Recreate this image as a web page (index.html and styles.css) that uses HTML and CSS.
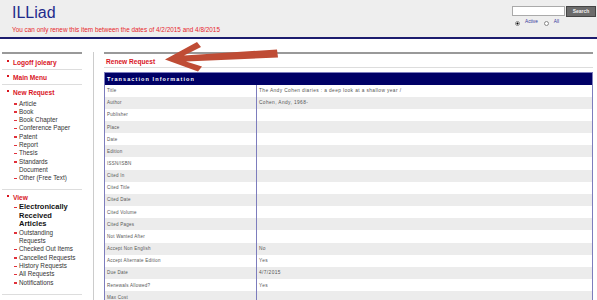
FILE: index.html
```html
<!DOCTYPE html>
<html lang="en">
<head>
    <meta charset="UTF-8">
    <title>ILLiad - Renew Request</title>
    <link rel="stylesheet" href="styles.css">
</head>
<body>

<!-- Header -->
<header class="top">
    <div class="brand">
        <h1 class="logo">ILLiad</h1>
        <p class="notice">You can only renew this item between the dates of 4/2/2015 and 4/8/2015</p>
    </div>
    <form class="search">
        <div class="search-row">
            <input type="text" class="search-input">
            <button type="button" class="search-btn">Search</button>
        </div>
        <div class="scope">
            <label><input type="radio" name="scope" checked> Active</label>
            <label><input type="radio" name="scope"> All</label>
        </div>
    </form>
</header>

<div class="page">
    <!-- Left menu -->
    <nav class="sidebar">
        <ul class="menu">
            <li class="menu-item"><a class="menu-link">Logoff joleary</a></li>
            <li class="menu-item"><a class="menu-link">Main Menu</a></li>
            <li class="menu-item">
                <a class="menu-link">New Request</a>
                <ul class="sub-menu">
                    <li>Article</li>
                    <li>Book</li>
                    <li>Book Chapter</li>
                    <li>Conference Paper</li>
                    <li>Patent</li>
                    <li>Report</li>
                    <li>Thesis</li>
                    <li>Standards Document</li>
                    <li>Other (Free Text)</li>
                </ul>
            </li>
            <li class="menu-item">
                <a class="menu-link">View</a>
                <ul class="sub-menu">
                    <li class="current">Electronically Received Articles</li>
                    <li>Outstanding Requests</li>
                    <li>Checked Out Items</li>
                    <li>Cancelled Requests</li>
                    <li>History Requests</li>
                    <li>All Requests</li>
                    <li>Notifications</li>
                </ul>
            </li>
            <li class="menu-item"><a class="menu-link">Tools</a></li>
        </ul>
    </nav>

    <!-- Main content -->
    <main class="content">
        <h2 class="page-title">Renew Request</h2>
        <div class="info">
            <div class="info-head">Transaction Information</div>
            <div class="info-row"><span class="label">Title</span><span class="value">The Andy Cohen diaries : a deep look at a shallow year /</span></div>
            <div class="info-row"><span class="label">Author</span><span class="value">Cohen, Andy, 1968-</span></div>
            <div class="info-row"><span class="label">Publisher</span><span class="value"></span></div>
            <div class="info-row"><span class="label">Place</span><span class="value"></span></div>
            <div class="info-row"><span class="label">Date</span><span class="value"></span></div>
            <div class="info-row"><span class="label">Edition</span><span class="value"></span></div>
            <div class="info-row"><span class="label">ISSN/ISBN</span><span class="value"></span></div>
            <div class="info-row"><span class="label">Cited In</span><span class="value"></span></div>
            <div class="info-row"><span class="label">Cited Title</span><span class="value"></span></div>
            <div class="info-row"><span class="label">Cited Date</span><span class="value"></span></div>
            <div class="info-row"><span class="label">Cited Volume</span><span class="value"></span></div>
            <div class="info-row"><span class="label">Cited Pages</span><span class="value"></span></div>
            <div class="info-row"><span class="label">Not Wanted After</span><span class="value"></span></div>
            <div class="info-row"><span class="label">Accept Non English</span><span class="value">No</span></div>
            <div class="info-row"><span class="label">Accept Alternate Edition</span><span class="value">Yes</span></div>
            <div class="info-row"><span class="label">Due Date</span><span class="value">4/7/2015</span></div>
            <div class="info-row"><span class="label">Renewals Allowed?</span><span class="value">Yes</span></div>
            <div class="info-row"><span class="label">Max Cost</span><span class="value"></span></div>
        </div>
    </main>
</div>

<!-- Annotation arrow drawn over the page -->
<svg class="arrow" viewBox="160 38 125 38" width="125" height="38">
    <polygon points="165,59.5 197,42 201,47 184,55.5 277,49.5 278,57.5 186,61.5 202,66.5 198,71.5" fill="#bf4c35"/>
</svg>

</body>
</html>
```

FILE: styles.css
```css
* {
    box-sizing: border-box;
    margin: 0;
    padding: 0;
}

body {
    font-family: "Liberation Sans", Arial, sans-serif;
    background: #fff;
    color: #333;
    width: 597px;
    height: 300px;
    overflow: hidden;
    position: relative;
}

/* Header */
.top {
    display: flex;
    justify-content: space-between;
    height: 39px;
    background: #eeeeee;
    border-bottom: 2px solid #1c1c6e;
}

.brand {
    padding-left: 12px;
}

.logo {
    font-size: 16px;
    line-height: 16px;
    font-weight: normal;
    color: #1e2b8c;
    padding-top: 5px;
}

.notice {
    margin-top: 5px;
    font-size: 6.4px;
    line-height: 8px;
    color: #e8262b;
}

.search {
    padding: 5.5px 1px 0 0;
}

.search-row {
    display: flex;
    align-items: center;
    gap: 1px;
}

.search-input {
    width: 53px;
    height: 10px;
    border: 1px solid #aaa;
    background: #fff;
}

.search-btn {
    width: 30px;
    height: 11px;
    background: #6b6b6b;
    border: 1px solid #444;
    color: #f2f2f2;
    font-family: inherit;
    font-size: 5px;
    font-weight: bold;
}

.scope {
    display: flex;
    gap: 6px;
    margin-top: 2px;
    padding-left: 3px;
}

.scope label {
    display: flex;
    align-items: flex-start;
    gap: 5px;
    font-size: 4.7px;
    line-height: 6px;
    color: #333399;
}

.scope input {
    appearance: none;
    width: 5px;
    height: 5px;
    margin-top: 2px;
    border: 1px solid #888;
    border-radius: 50%;
    background: #fff;
}

.scope input:checked {
    background: radial-gradient(circle, #000 40%, #fff 55%);
}

/* Page */
.page {
    display: flex;
    padding-top: 13px;
}

/* Left menu */
.sidebar {
    width: 94px;
    flex-shrink: 0;
    padding: 0 11px 0 2px;
    border-right: 1px solid #ccc;
}

.menu {
    list-style: none;
    border-top: 2px solid #999;
    padding-top: 1px;
}

.menu-item {
    padding: 3px 0 2px;
    border-bottom: 1px solid #ddd;
}

.menu-link {
    display: block;
    position: relative;
    padding-left: 11px;
    font-size: 6.6px;
    line-height: 9px;
    font-weight: bold;
    color: #d9141e;
}

.menu-link::before {
    content: "";
    position: absolute;
    left: 5px;
    top: 2px;
    width: 2px;
    height: 2px;
    background: #d9141e;
}

.sub-menu {
    list-style: none;
    margin: 2.5px 0 4.5px;
    padding: 0 5px 0 17px;
}

.menu-link + .sub-menu .current:first-child {
    margin-top: -1.5px;
}

.sub-menu li {
    position: relative;
    font-size: 6.3px;
    line-height: 8.33px;
    color: #333;
}

.sub-menu li::before {
    content: "";
    position: absolute;
    left: -5px;
    top: 3.5px;
    width: 3px;
    height: 1.5px;
    background: #e0303a;
}

.sub-menu li.current {
    font-size: 7.5px;
    line-height: 8.5px;
    font-weight: bold;
    color: #111;
}

/* Main content */
.content {
    flex: 1;
    margin-left: 10px;
    padding-right: 4px;
}

.page-title {
    border-top: 2px solid #999;
    border-bottom: 1px solid #ddd;
    padding: 3px 2px 0.5px;
    font-size: 6.6px;
    line-height: 9px;
    color: #d9141e;
}

.info {
    margin-top: 4px;
    border: 1px solid #7d7dbd;
}

.info-head {
    height: 12px;
    line-height: 12px;
    padding-left: 2px;
    background: #000066;
    color: #fff;
    font-size: 5.5px;
    font-weight: bold;
    letter-spacing: 1.1px;
}

.info-row {
    display: grid;
    grid-template-columns: 151px 1fr;
    height: 12.17px;
    font-size: 4.5px;
    letter-spacing: 0.25px;
    color: #555;
}

.info-row:nth-child(odd) {
    background: #ececec;
}

.label,
.value {
    display: flex;
    align-items: center;
    padding-left: 2px;
}

.value {
    border-left: 1px solid #7d7dbd;
    font-size: 4.8px;
    letter-spacing: 0.4px;
}

/* Annotation */
.arrow {
    position: absolute;
    left: 160px;
    top: 38px;
}
```
